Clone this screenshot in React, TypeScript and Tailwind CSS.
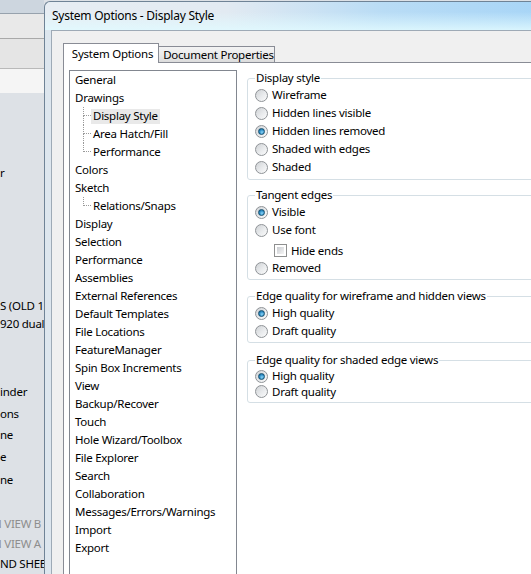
import type { ReactNode } from "react";

type TreeItem = {
  label: string;
  child?: boolean;
  last?: boolean;
  selected?: boolean;
};

const tree: TreeItem[] = [
  { label: "General" },
  { label: "Drawings" },
  { label: "Display Style", child: true, selected: true },
  { label: "Area Hatch/Fill", child: true },
  { label: "Performance", child: true, last: true },
  { label: "Colors" },
  { label: "Sketch" },
  { label: "Relations/Snaps", child: true, last: true },
  { label: "Display" },
  { label: "Selection" },
  { label: "Performance" },
  { label: "Assemblies" },
  { label: "External References" },
  { label: "Default Templates" },
  { label: "File Locations" },
  { label: "FeatureManager" },
  { label: "Spin Box Increments" },
  { label: "View" },
  { label: "Backup/Recover" },
  { label: "Touch" },
  { label: "Hole Wizard/Toolbox" },
  { label: "File Explorer" },
  { label: "Search" },
  { label: "Collaboration" },
  { label: "Messages/Errors/Warnings" },
  { label: "Import" },
  { label: "Export" },
];

function Radio({ checked }: { checked?: boolean }) {
  return (
    <span className="flex h-[13px] w-[13px] shrink-0 items-center justify-center rounded-full border border-[#8f9397] bg-[linear-gradient(135deg,#cfd2d5_0%,#e9ebed_55%,#fbfbfb_100%)]">
      {checked ? (
        <span className="h-[7px] w-[7px] rounded-full border border-[#17506f] bg-[radial-gradient(circle_at_60%_65%,#8fd6f7_0%,#2b8cc6_55%,#145985_100%)]" />
      ) : null}
    </span>
  );
}

function Option({ label, checked, rowClass }: { label: string; checked?: boolean; rowClass: string }) {
  return (
    <div className={`flex items-center gap-[4px] ${rowClass}`}>
      <Radio checked={checked} />
      <span>{label}</span>
    </div>
  );
}

function Group({ title, className, children }: { title: string; className?: string; children: ReactNode }) {
  return (
    <fieldset className={`rounded-[3px] border border-[#d5dfe5] pl-[7px] ${className ?? ""}`}>
      <legend className="px-[1px] leading-[16px]">{title}</legend>
      {children}
    </fieldset>
  );
}

function TreeRow({ item }: { item: TreeItem }) {
  if (!item.child) {
    return <div className="flex h-[18px] items-center pl-[5px]">{item.label}</div>;
  }
  return (
    <div className="flex h-[18px] items-stretch pl-[13px]">
      <div className="flex w-[8px] flex-col">
        <span className="h-[9px] border-b border-l border-dotted border-[#9a9a9a]" />
        {item.last ? null : <span className="h-[9px] border-l border-dotted border-[#9a9a9a]" />}
      </div>
      <div className="flex items-center">
        <span className={`flex h-[15px] items-center px-[2px] ${item.selected ? "bg-[#e9e9e9]" : ""}`}>{item.label}</span>
      </div>
    </div>
  );
}

function Backdrop() {
  return (
    <div className="flex w-[44px] shrink-0 flex-col overflow-hidden whitespace-nowrap">
      <div className="h-[13px] shrink-0 bg-[#cdd6df]" />
      <div className="h-[25px] shrink-0 border-t border-[#97a2ad] bg-[#e9e9e9]" />
      <div className="h-[30px] shrink-0 border-t border-[#a9a9a9] bg-[#e5e5e5]" />
      <div className="h-[25px] shrink-0 border-t border-[#b9b9b9] bg-[#f5f5f5]" />
      <div className="mt-[71px] h-[18px] shrink-0 leading-[18px]">r</div>
      <div className="mt-[115px] h-[18px] shrink-0 leading-[18px]">S (OLD 1</div>
      <div className="h-[18px] shrink-0 leading-[18px]">920 dual</div>
      <div className="mt-[50px] h-[18px] shrink-0 leading-[18px]">inder</div>
      <div className="mt-[4px] h-[18px] shrink-0 leading-[18px]">ons</div>
      <div className="mt-[3px] h-[18px] shrink-0 leading-[18px]">ne</div>
      <div className="mt-[4px] h-[18px] shrink-0 leading-[18px]">e</div>
      <div className="mt-[5px] h-[18px] shrink-0 leading-[18px]">ne</div>
      <div className="mt-[26px] ml-[-7px] h-[18px] shrink-0 leading-[18px] text-[#8e8e8e]">N VIEW B</div>
      <div className="mt-[2px] ml-[-7px] h-[18px] shrink-0 leading-[18px] text-[#8e8e8e]">N VIEW A</div>
      <div className="mt-[2px] h-[18px] shrink-0 leading-[18px]">ND SHEET</div>
    </div>
  );
}

export default function App() {
  return (
    <div className="flex h-[574px] w-[531px] items-start overflow-hidden bg-[#dde1e6] text-[11.5px] tracking-[-0.25px] text-black [font-family:'Noto_Sans','DejaVu_Sans',sans-serif]">
      <Backdrop />

      <div className="mt-[1px] flex h-[600px] w-[520px] shrink-0 flex-col overflow-hidden rounded-tl-[6px] border-l border-t border-[#6f8396] bg-[#dde6ee]">
        <div className="flex h-[28px] shrink-0 items-center rounded-tl-[6px] bg-[linear-gradient(180deg,rgba(255,255,255,0)_35%,rgba(225,250,255,0.85)_100%),linear-gradient(90deg,#e7edf3_0%,#e2eaf2_35%,#b9dcf5_65%,#a5d4f7_100%)] pl-[7px] text-[12px]">
          System Options - Display Style
        </div>

        <div className="ml-[6px] flex min-h-0 flex-1 flex-col overflow-hidden border-l border-t border-[#9eaab6] bg-[#f0f0f0] pl-[11px] pt-[12px]">
          <div className="flex shrink-0 items-end whitespace-nowrap">
            <div className="relative z-10 mb-[-1px] flex h-[20px] w-[96px] items-center justify-center border border-b-0 border-[#898c95] bg-white pl-[3px]">
              System Options
            </div>
            <div className="flex h-[16px] w-[116px] items-center justify-center border-r border-t border-[#898c95] bg-[linear-gradient(180deg,#f3f3f3_0%,#ebebeb_50%,#dcdcdc_100%)] pl-[4px]">
              Document Properties
            </div>
          </div>

          <div className="flex min-h-0 flex-1 border border-[#898c95] bg-white pl-[5px] pt-[7px]">
            <div className="h-[540px] w-[168px] shrink-0 border border-[#828790] bg-white">
              {tree.map((item, i) => (
                <TreeRow key={i} item={item} />
              ))}
            </div>

            <div className="ml-[10px] flex w-[300px] shrink-0 flex-col">
              <Group title="Display style" className="pb-[3px]">
                <Option label="Wireframe" rowClass="h-[18px]" />
                <Option label="Hidden lines visible" rowClass="h-[18px]" />
                <Option label="Hidden lines removed" checked rowClass="h-[18px]" />
                <Option label="Shaded with edges" rowClass="h-[18px]" />
                <Option label="Shaded" rowClass="h-[18px]" />
              </Group>

              <Group title="Tangent edges" className="mt-[7px] pb-[2px]">
                <Option label="Visible" checked rowClass="h-[18px]" />
                <Option label="Use font" rowClass="h-[18px]" />
                <div className="flex h-[20px] items-center gap-[4px] pl-[19px] pt-[3px]">
                  <span className="flex h-[13px] w-[13px] shrink-0 border border-[#8e8f8f] bg-white p-[2px]">
                    <span className="flex-1 bg-[linear-gradient(135deg,#c9ccd0_0%,#e4e5e7_60%,#f5f5f5_100%)]" />
                  </span>
                  <span>Hide ends</span>
                </div>
                <Option label="Removed" rowClass="h-[18px]" />
              </Group>

              <Group title="Edge quality for wireframe and hidden views" className="mt-[8px] pb-[2px]">
                <Option label="High quality" checked rowClass="h-[18px]" />
                <Option label="Draft quality" rowClass="h-[18px]" />
              </Group>

              <Group title="Edge quality for shaded edge views" className="mt-[9px] pb-[3px]">
                <Option label="High quality" checked rowClass="h-[16px]" />
                <Option label="Draft quality" rowClass="h-[15px]" />
              </Group>
            </div>
          </div>
        </div>
      </div>
    </div>
  );
}
